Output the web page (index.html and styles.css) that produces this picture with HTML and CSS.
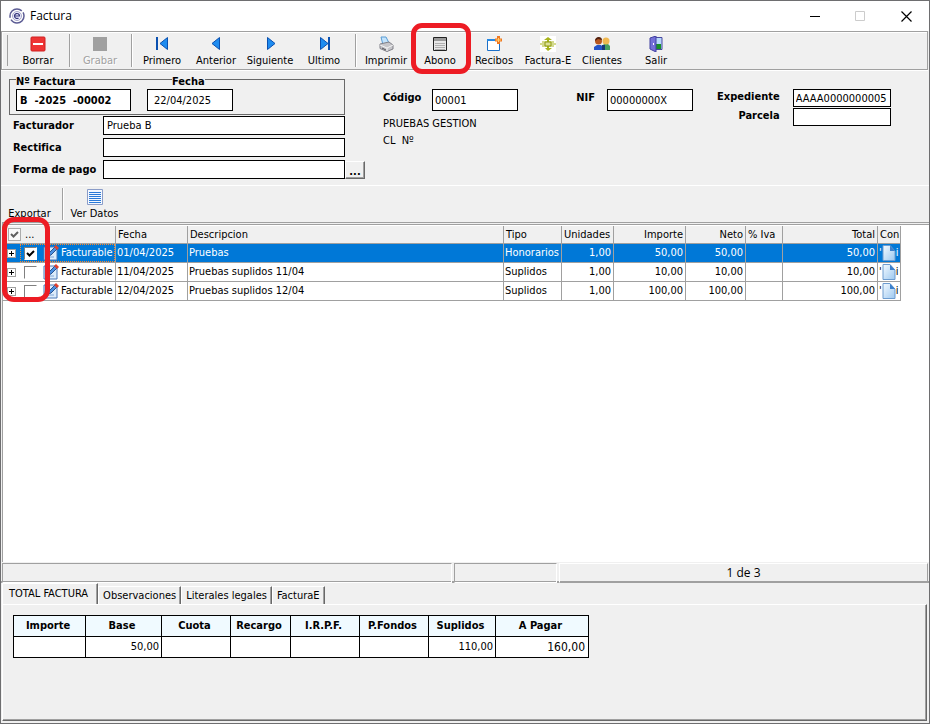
FILE: index.html
```html
<!DOCTYPE html>
<html lang="es">
<head>
    <meta charset="UTF-8">
    <meta name="viewport" content="width=device-width, initial-scale=1.0">
    <title>Factura</title>
    <link rel="stylesheet" href="styles.css">
</head>
<body>
    <svg class="defs" width="0" height="0" aria-hidden="true">
        <defs>
            <linearGradient id="page-fill" x1="0" y1="0" x2="1" y2="1">
                <stop offset="0" stop-color="#f4faff" />
                <stop offset="1" stop-color="#9cc8f0" />
            </linearGradient>
            <symbol id="edit" viewBox="0 0 16 16">
                <path d="M1 2h13v13H1z" fill="#dcebfa" stroke="#4a78b8" />
                <path d="M3 12h8M3 9h3" stroke="#7ea6d8" />
                <path d="M5 11l1-3 6-6 2 2-6 6z" fill="#4b8fe0" stroke="#28508c" />
                <path d="M11 2l2-2 3 3-2 2z" fill="#e0402c" />
            </symbol>
            <symbol id="page" viewBox="0 0 16 16">
                <path d="M2 .5h7L14 6v9.500H2z" fill="url(#page-fill)" stroke="#6c9cd0" />
                <path d="M9 .5V6h5z" fill="#3c80cc" />
            </symbol>
        </defs>
    </svg>

    <div class="window">
        <header class="titlebar">
            <svg width="16" height="16" viewBox="0 0 16 16">
                <circle cx="8" cy="8" r="7" fill="none" stroke="#5c5c94" stroke-width="1.500" stroke-dasharray="18 2" />
                <circle cx="8" cy="8" r="4.500" fill="#eef" stroke="#a8a8c8" />
                <path d="M5.500 8h5a2.500 2.500 0 1 0-1 2" fill="none" stroke="#35357a" stroke-width="1.200" />
            </svg>
            <h1>Factura</h1>
            <div class="window-buttons">
                <button type="button" aria-label="Minimizar">
                    <svg width="11" height="11"><path d="M1 5.500h10" stroke="#000" /></svg>
                </button>
                <button type="button" aria-label="Maximizar" disabled>
                    <svg width="11" height="11"><path d="M.5.5h9v9h-9z" fill="none" stroke="#ccc" /></svg>
                </button>
                <button type="button" aria-label="Cerrar">
                    <svg width="11" height="11"><path d="M.5.5l10 10M10.500.5l-10 10" stroke="#000" stroke-width="1.200" /></svg>
                </button>
            </div>
        </header>

        <nav class="toolbar">
            <span class="grip"></span>
            <button type="button" class="tool">
                <svg width="16" height="16"><rect x="1" y="1" width="14" height="14" rx="1" fill="#ee3434" stroke="#d02020" /><path d="M3 8h10" stroke="#fff" stroke-width="2" /></svg>
                Borrar
            </button>
            <span class="separator"></span>
            <button type="button" class="tool" disabled>
                <svg width="16" height="16"><path d="M1 1h14v14H1z" fill="#a0a0a0" /></svg>
                Grabar
            </button>
            <span class="separator"></span>
            <button type="button" class="tool">
                <svg width="16" height="16"><path d="M2 1h2v13H2z" fill="#0a50b0" /><path d="M13.500 1.500v12L6 7.500z" fill="#1e8cf0" stroke="#0a50b0" /></svg>
                Primero
            </button>
            <button type="button" class="tool">
                <svg width="16" height="16"><path d="M11.500 1.500v12L4 7.500z" fill="#1e8cf0" stroke="#0a50b0" /></svg>
                Anterior
            </button>
            <button type="button" class="tool">
                <svg width="16" height="16"><path d="M5.500 1.500v12l7.500-6z" fill="#1e8cf0" stroke="#0a50b0" /></svg>
                Siguiente
            </button>
            <button type="button" class="tool">
                <svg width="16" height="16"><path d="M12 1h2v13h-2z" fill="#0a50b0" /><path d="M4.500 1.500v12l7.500-6z" fill="#1e8cf0" stroke="#0a50b0" /></svg>
                Ultimo
            </button>
            <span class="separator"></span>
            <button type="button" class="tool">
                <svg width="16" height="16">
                    <path d="M3 1h5l3 6-6 2z" fill="#c4e4fc" stroke="#5a9cd4" />
                    <path d="M2 8l9-2 4 3v4l-6 2.500-7-3z" fill="#c6c6ca" stroke="#808088" />
                    <path d="M2 9l7 3 6-3M9 12v3" fill="none" stroke="#f4f4f4" />
                    <path d="M4 12l4 2" stroke="#55555c" />
                </svg>
                Imprimir
            </button>
            <button type="button" class="tool marked">
                <svg width="16" height="16"><path d="M1.500 1.500h13v13h-13z" fill="#e8e8e8" stroke="#222" /><path d="M2 2h12v3H2z" fill="#9a9a9a" /><path d="M3 7.500h10M3 9.500h10M3 11.500h10M3 13.500h10" stroke="#b0b0b0" /></svg>
                Abono
            </button>
            <button type="button" class="tool">
                <svg width="16" height="16"><path d="M1.500 3.500h12v11h-12z" fill="#fff" stroke="#1c70c8" /><path d="M1 3h13v2H1z" fill="#2488e4" /><path d="M12.500 0v8M9 4h7" stroke="#f07820" stroke-width="3" /><path d="M12.500 2v4M10 4h5" stroke="#ffd070" /></svg>
                Recibos
            </button>
            <button type="button" class="tool">
                <svg width="16" height="16"><path d="M0 0h16v16H0z" fill="#fff" /><path d="M8 1l4 3H9v8h3l-4 3-3-3h2V4H4z" fill="#a8b41c" /><path d="M2 6h12M0 8h16M2 10h12" stroke="#a8b41c" /><path d="M5 6h6v4H5z" fill="#dce098" stroke="#8e9a10" /></svg>
                Factura-E
            </button>
            <button type="button" class="tool">
                <svg width="16" height="16"><path d="M0 14v-3l3-2h4l2 2v3z" fill="#2454c8" /><path d="M8 14v-4l2-2h4l2 2v4z" fill="#48a060" /><circle cx="4.500" cy="5" r="3.500" fill="#b85820" /><circle cx="12" cy="5" r="3.500" fill="#f0b850" /><path d="M1 5c0-5 7-5 7-1L4 3z" fill="#502010" /><path d="M8 14V9h3v5z" fill="#183878" /></svg>
                Clientes
            </button>
            <button type="button" class="tool">
                <svg width="16" height="16"><path d="M6 1.500h8v12H6z" fill="#b8d8fc" stroke="#4848a0" /><path d="M8 8h5v5H8z" fill="#189028" /><path d="M2 2l6-2v16l-6-3z" fill="#7470d8" stroke="#4040a0" /><path d="M5 7h1v2H5z" fill="#fff" /></svg>
                Salir
            </button>
        </nav>

        <form class="invoice">
            <section class="invoice-data">
                <div class="group">
                    <div class="number">
                        <label for="factura">Nº Factura</label>
                        <input id="factura" type="text" value="B  -2025  -00002">
                    </div>
                    <div class="date">
                        <label for="fecha">Fecha</label>
                        <input id="fecha" type="text" value="22/04/2025">
                    </div>
                </div>
                <div class="line">
                    <label for="facturador">Facturador</label>
                    <input id="facturador" type="text" value="Prueba B">
                </div>
                <div class="line">
                    <label for="rectifica">Rectifica</label>
                    <input id="rectifica" type="text">
                </div>
                <div class="line">
                    <label for="pago">Forma de pago</label>
                    <input id="pago" type="text">
                    <button type="button" class="browse">...</button>
                </div>
            </section>

            <section class="client">
                <div class="client-fields">
                    <label for="codigo">Código</label>
                    <input id="codigo" type="text" value="00001">
                    <label for="nif">NIF</label>
                    <input id="nif" type="text" value="00000000X">
                </div>
                <p>PRUEBAS GESTION</p>
                <p>CL&nbsp; Nº</p>
            </section>

            <section class="file">
                <label for="expediente">Expediente</label>
                <input id="expediente" type="text" value="AAAA0000000005">
                <label for="parcela">Parcela</label>
                <input id="parcela" type="text">
            </section>
        </form>

        <nav class="subbar">
            <button type="button" class="tool">Exportar</button>
            <span class="separator"></span>
            <button type="button" class="tool">
                <svg width="16" height="16"><path d="M.5.500h15v15H.5z" fill="#f4f8ff" stroke="#8a9cc8" /><path d="M2 3.500h12M2 5.500h12M2 7.500h12M2 9.500h12M2 11.500h12M2 13.500h12" stroke="#2a7ad8" /></svg>
                Ver Datos
            </button>
        </nav>

        <main class="lines">
            <table>
                <colgroup>
                    <col class="w-state">
                    <col class="w-date">
                    <col>
                    <col class="w-type">
                    <col class="w-units">
                    <col class="w-amount">
                    <col class="w-net">
                    <col class="w-vat">
                    <col class="w-total">
                    <col class="w-con">
                </colgroup>
                <thead>
                    <tr>
                        <th><div class="head-state"><input type="checkbox" aria-label="Marcar todo" checked disabled>...</div></th>
                        <th>Fecha</th>
                        <th>Descripcion</th>
                        <th>Tipo</th>
                        <th>Unidades</th>
                        <th class="num">Importe</th>
                        <th class="num">Neto</th>
                        <th>% Iva</th>
                        <th class="num">Total</th>
                        <th>Con</th>
                    </tr>
                </thead>
                <tbody>
                    <tr class="selected">
                        <td>
                            <div class="state">
                                <button type="button" class="expand" aria-label="Expandir"></button>
                                <label class="check"><input type="checkbox" checked><svg width="16" height="16"><use href="#edit" /></svg>Facturable</label>
                            </div>
                        </td>
                        <td>01/04/2025</td>
                        <td>Pruebas</td>
                        <td>Honorarios</td>
                        <td class="num">1,00</td>
                        <td class="num">50,00</td>
                        <td class="num">50,00</td>
                        <td></td>
                        <td class="num">50,00</td>
                        <td><div class="con">'<svg width="16" height="16"><use href="#page" /></svg>i</div></td>
                    </tr>
                    <tr>
                        <td>
                            <div class="state">
                                <button type="button" class="expand" aria-label="Expandir"></button>
                                <label class="check"><input type="checkbox"><svg width="16" height="16"><use href="#edit" /></svg>Facturable</label>
                            </div>
                        </td>
                        <td>11/04/2025</td>
                        <td>Pruebas suplidos 11/04</td>
                        <td>Suplidos</td>
                        <td class="num">1,00</td>
                        <td class="num">10,00</td>
                        <td class="num">10,00</td>
                        <td></td>
                        <td class="num">10,00</td>
                        <td><div class="con">'<svg width="16" height="16"><use href="#page" /></svg>i</div></td>
                    </tr>
                    <tr>
                        <td>
                            <div class="state">
                                <button type="button" class="expand" aria-label="Expandir"></button>
                                <label class="check"><input type="checkbox"><svg width="16" height="16"><use href="#edit" /></svg>Facturable</label>
                            </div>
                        </td>
                        <td>12/04/2025</td>
                        <td>Pruebas suplidos 12/04</td>
                        <td>Suplidos</td>
                        <td class="num">1,00</td>
                        <td class="num">100,00</td>
                        <td class="num">100,00</td>
                        <td></td>
                        <td class="num">100,00</td>
                        <td><div class="con">'<svg width="16" height="16"><use href="#page" /></svg>i</div></td>
                    </tr>
                </tbody>
            </table>
            <div class="marker"></div>
        </main>

        <div class="status">
            <span></span>
            <span></span>
            <span class="count">1 de 3</span>
        </div>

        <div class="tabs" role="tablist">
            <button type="button" role="tab" aria-selected="true" class="active">TOTAL FACTURA</button>
            <button type="button" role="tab">Observaciones</button>
            <button type="button" role="tab">Literales legales</button>
            <button type="button" role="tab">FacturaE</button>
        </div>
        <section class="tab-panel">
            <table class="totals">
                <colgroup>
                    <col class="t-importe">
                    <col class="t-base">
                    <col class="t-tax">
                    <col class="t-recargo">
                    <col class="t-tax">
                    <col class="t-tax">
                    <col class="t-suplidos">
                    <col class="t-pagar">
                </colgroup>
                <thead>
                    <tr>
                        <th>Importe</th>
                        <th>Base</th>
                        <th>Cuota</th>
                        <th>Recargo</th>
                        <th>I.R.P.F.</th>
                        <th>P.Fondos</th>
                        <th>Suplidos</th>
                        <th>A Pagar</th>
                    </tr>
                </thead>
                <tbody>
                    <tr>
                        <td></td>
                        <td>50,00</td>
                        <td></td>
                        <td></td>
                        <td></td>
                        <td></td>
                        <td>110,00</td>
                        <td class="pay">160,00</td>
                    </tr>
                </tbody>
            </table>
        </section>
    </div>
</body>
</html>
```

FILE: styles.css
```css
*,
*::after {
    box-sizing: border-box;
}

body {
    margin: 0;
    background: #f0f0f0;
    color: #000;
    font-family: "DejaVu Sans Condensed", "DejaVu Sans", sans-serif;
    font-size: 11px;
    line-height: 14px;
}

button,
input {
    font: inherit;
    color: inherit;
    margin: 0;
}

button {
    padding: 0;
    border: none;
    background: none;
}

p {
    margin: 0;
}

svg {
    display: block;
    flex: none;
}

.defs {
    position: absolute;
}

.window {
    display: flex;
    flex-direction: column;
    min-height: 100vh;
    border: 1px solid #6e6e70;
}

/* title bar */
.titlebar {
    display: flex;
    align-items: center;
    height: 30px;
    padding-left: 8px;
    gap: 5px;
    background: #fff;
}

.titlebar h1 {
    margin: 0;
    font-family: "Open Sans", sans-serif;
    font-size: 12px;
    font-weight: normal;
}

.window-buttons {
    display: flex;
    height: 100%;
    margin-left: auto;
}

.window-buttons button {
    display: flex;
    align-items: center;
    justify-content: center;
    width: 46px;
}

/* toolbars */
.toolbar {
    display: flex;
    height: 39px;
    margin-right: 1px;
    border: 1px solid #a0a0a0;
    box-shadow: inset 1px 1px #fff, 0 1px #fff;
}

.grip {
    width: 6px;
    margin: 3px 3px 3px 0;
    border-right: 1px solid #a0a0a0;
}

.tool {
    display: flex;
    flex-direction: column;
    align-items: center;
    justify-content: flex-end;
    width: 54px;
    gap: 2px;
    padding-bottom: 1px;
    white-space: nowrap;
}

.tool:disabled {
    color: #a0a0a0;
    text-shadow: 1px 1px #fff;
}

.separator {
    width: 8px;
    margin: 2px 0;
    background: linear-gradient(to right, #a0a0a0 1px, #fff 1px, #fff 2px, transparent 2px) 4px 0 no-repeat;
}

.marked {
    position: relative;
}

.marked::after,
.marker {
    position: absolute;
    z-index: 1;
    border: 5px solid #ed1c24;
    pointer-events: none;
}

.marked::after {
    content: "";
    top: -9px;
    left: -2px;
    width: 60px;
    height: 51px;
    border-radius: 11px;
}

/* invoice form */
.invoice {
    display: flex;
    padding: 9px 8px 3px;
}

.invoice label {
    font-weight: bold;
    white-space: nowrap;
}

.invoice input {
    min-width: 0;
    height: 22px;
    padding: 0 2px;
    border: 1px solid #000;
    background: #fff;
}

.invoice-data {
    width: 356px;
}

.group {
    display: flex;
    gap: 16px;
    width: 336px;
    height: 36px;
    margin-bottom: 1px;
    padding-left: 6px;
    border: 1px solid #696969;
}

.group label {
    display: table;
    margin-top: -5px;
    background: #f0f0f0;
    line-height: 14px;
}

.group input {
    display: block;
    width: 100%;
}

.number {
    width: 115px;
}

.number input {
    padding-left: 3px;
    font-weight: bold;
}

.date {
    width: 86px;
}

.date label {
    margin-left: 25px;
}

.date input {
    padding-left: 6px;
}

.line {
    display: flex;
    align-items: flex-end;
    margin-bottom: 3px;
    padding-left: 4px;
}

.line label {
    width: 90px;
    line-height: 19px;
}

.line input {
    width: 242px;
    height: 19px;
}

.line input#facturador {
    padding-left: 3px;
}

.browse {
    width: 20px;
    height: 18px;
    border: 1px solid;
    border-color: #fff #696969 #696969 #fff;
    box-shadow: inset -1px -1px #a0a0a0;
    font-weight: bold;
}

.line .browse {
    padding-top: 4px;
    line-height: 12px;
}

.client {
    margin-left: 18px;
    padding-top: 10px;
}

.client-fields {
    display: grid;
    grid-template-columns: 49px 86px 89px 86px;
    margin-bottom: 4px;
}

.client-fields label[for="nif"] {
    padding-right: 12px;
    text-align: right;
}

.client-fields label {
    line-height: 17px;
}

.client p {
    line-height: 17px;
}

.file {
    display: grid;
    grid-template-columns: auto 98px;
    align-content: start;
    column-gap: 13px;
    row-gap: 1px;
    margin-left: 24px;
    padding-top: 10px;
    text-align: right;
}

.file label {
    line-height: 16px;
}

.file input {
    height: 18px;
}

.subbar {
    display: flex;
    height: 37px;
    border-top: 1px solid #fff;
}

.subbar .tool {
    width: 57px;
}

/* invoice lines */
.lines {
    position: relative;
    flex: 1;
    margin-left: 1px;
    padding-top: 3px;
    border-top: 1px solid #a0a0a0;
    border-left: 1px solid #a0a0a0;
    background: linear-gradient(#f0f0f0 1px, #a0a0a0 1px, #a0a0a0 2px, #fff 2px);
}

.lines table {
    width: calc(100% - 28px);
    border-collapse: separate;
    border-spacing: 0;
    table-layout: fixed;
}

.w-state { width: 113px; }
.w-date { width: 72px; }
.w-type { width: 58px; }
.w-units { width: 52px; }
.w-amount { width: 72px; }
.w-net { width: 60px; }
.w-vat { width: 37px; }
.w-total { width: 95px; }
.w-con { width: 23px; }

.lines th,
.lines td {
    overflow: hidden;
    padding: 0 2px 0 1px;
    border-right: 1px solid #a0a0a0;
    border-bottom: 1px solid #a0a0a0;
    font-weight: normal;
    text-align: left;
    white-space: nowrap;
}

.lines th {
    height: 18px;
    padding-left: 2px;
    background: #f0f0f0;
}

.lines td {
    height: 19px;
    background: #fff;
}

.lines .num {
    text-align: right;
}

.lines .selected td {
    background: #0078d7;
    color: #fff;
}

.lines th:first-child,
.lines td:first-child {
    padding: 0;
}

.lines input {
    appearance: none;
    flex: none;
    width: 13px;
    height: 13px;
    border: 1px solid;
    border-color: #808080 #fff #fff #808080;
    background: #fff;
}

.lines input:checked {
    background: #fff url("data:image/svg+xml,%3Csvg xmlns='http://www.w3.org/2000/svg' viewBox='0 0 11 11'%3E%3Cpath d='M2 5l2.500 2.500L9 3' fill='none' stroke='black' stroke-width='2'/%3E%3C/svg%3E");
}

.lines input:disabled {
    border-color: #808080;
    opacity: 0.6;
}

.head-state {
    display: flex;
    align-items: center;
    gap: 4px;
    padding-left: 5px;
}

.state {
    display: flex;
    align-items: center;
    height: 18px;
    padding-left: 4px;
}

.expand {
    flex: none;
    width: 9px;
    height: 9px;
    margin-right: 4px;
    border: 1px solid #a0a0a0;
    background:
        linear-gradient(#000, #000) center / 5px 1px no-repeat,
        linear-gradient(#000, #000) center / 1px 5px no-repeat,
        #fff;
}

.check {
    display: flex;
    align-items: center;
    flex: 1;
    height: 18px;
    padding-left: 3px;
    border: 1px dotted transparent;
}

.check svg {
    margin: 0 2px 0 6px;
}

.selected .check {
    border-color: #ff8728;
}

.con {
    display: flex;
    align-items: center;
}

.con svg {
    margin: 0 -1px;
}

.marker {
    top: -6px;
    left: -1px;
    width: 48px;
    height: 85px;
    border-radius: 12px;
}

/* status bar */
.status {
    display: grid;
    grid-template-columns: 450px 103px 1fr;
    gap: 2px;
    height: 21px;
    padding: 1px 1px 0;
    border-bottom: 2px solid #a0a0a0;
}

.status span {
    border: 1px solid;
    border-color: #a0a0a0 #fff #fff #a0a0a0;
}

.status .count {
    border-color: #fff #a0a0a0 #a0a0a0 #fff;
    font-family: "Open Sans", sans-serif;
    font-size: 12px;
    line-height: 18px;
    text-align: center;
}

/* tabs */
.tabs {
    display: flex;
    align-items: flex-end;
    height: 21px;
    padding-left: 1px;
}

.tabs button {
    height: 18px;
    padding: 0 4px;
    border-top: 1px solid #fff;
    border-left: 1px solid #fff;
    border-right: 1px solid #696969;
    box-shadow: inset -1px 0 #a0a0a0;
    white-space: nowrap;
}

.tabs .active {
    height: 21px;
    padding: 0 9px 0 6px;
}

.tab-panel {
    height: 117px;
    margin: 0 2px 2px 1px;
    padding: 10px;
    border: 1px solid;
    border-color: #fff #696969 #696969 #fff;
    box-shadow: inset -1px -1px #a0a0a0;
}

.totals {
    border-collapse: collapse;
    table-layout: fixed;
    width: 575px;
}

.t-importe { width: 72px; }
.t-base { width: 76px; }
.t-tax { width: 69px; }
.t-recargo { width: 60px; }
.t-suplidos { width: 67px; }
.t-pagar { width: 93px; }

.totals th,
.totals td {
    height: 21px;
    padding: 0 2px;
    border: 1px solid #000;
}

.totals th {
    padding-right: 5px;
    background: #f0faff;
}

.totals td {
    background: #fff;
    text-align: right;
}

.totals .pay {
    padding-right: 3px;
    font-size: 12px;
}
```
